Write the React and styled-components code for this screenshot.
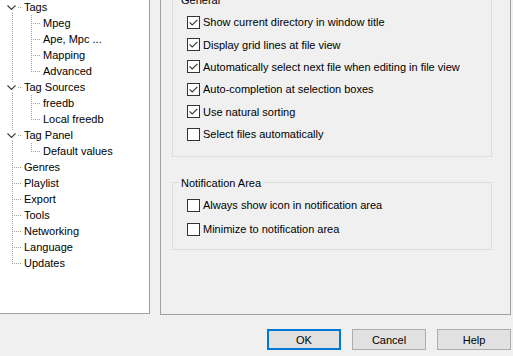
import styled, { createGlobalStyle } from "styled-components";

const GlobalStyle = createGlobalStyle`
  html, body {
    margin: 0;
    padding: 0;
    background: #f0f0f0;
  }
  body {
    font-family: "Liberation Sans", Arial, sans-serif;
    font-size: 11px;
    color: #000;
  }
`;

const treeItems = [
  { label: "Tags", guides: ["tee"], expander: true, first: true },
  { label: "Mpeg", guides: ["pipe", "tee"] },
  { label: "Ape, Mpc ...", guides: ["pipe", "tee"] },
  { label: "Mapping", guides: ["pipe", "tee"] },
  { label: "Advanced", guides: ["pipe", "elbow"] },
  { label: "Tag Sources", guides: ["tee"], expander: true },
  { label: "freedb", guides: ["pipe", "tee"] },
  { label: "Local freedb", guides: ["pipe", "elbow"] },
  { label: "Tag Panel", guides: ["tee"], expander: true },
  { label: "Default values", guides: ["pipe", "elbow"] },
  { label: "Genres", guides: ["tee"] },
  { label: "Playlist", guides: ["tee"] },
  { label: "Export", guides: ["tee"] },
  { label: "Tools", guides: ["tee"] },
  { label: "Networking", guides: ["tee"] },
  { label: "Language", guides: ["tee"] },
  { label: "Updates", guides: ["elbow"] },
];

const generalOptions = [
  { label: "Show current directory in window title", checked: true },
  { label: "Display grid lines at file view", checked: true },
  { label: "Automatically select next file when editing in file view", checked: true },
  { label: "Auto-completion at selection boxes", checked: true },
  { label: "Use natural sorting", checked: true },
  { label: "Select files automatically", checked: false },
];

const notificationOptions = [
  { label: "Always show icon in notification area", checked: false },
  { label: "Minimize to notification area", checked: false },
];

const DOTS_V = "repeating-linear-gradient(to bottom, #a0a0a0 0 1px, transparent 1px 2px)";
const DOTS_H = "repeating-linear-gradient(to right, #a0a0a0 0 1px, transparent 1px 2px)";

function guideBackground(kind, first) {
  if (kind === "pipe") {
    return `
      background-image: ${DOTS_V};
      background-size: 1px 16px;
      background-position: 10px 0;
    `;
  }
  if (kind === "elbow") {
    return `
      background-image: ${DOTS_V}, ${DOTS_H};
      background-size: 1px 9px, 9px 1px;
      background-position: 10px 0, 10px 8px;
    `;
  }
  // tee
  return `
    background-image: ${DOTS_V}, ${DOTS_H};
    background-size: 1px ${first ? "8px" : "16px"}, 9px 1px;
    background-position: 10px ${first ? "8px" : "0"}, 10px 8px;
  `;
}

function Expander() {
  return (
    <ExpanderBox>
      <svg width="11" height="9" viewBox="0 0 11 9">
        <path d="M1.5 2.5 L5.5 6.5 L9.5 2.5" fill="none" stroke="#404040" strokeWidth="1.2" />
      </svg>
    </ExpanderBox>
  );
}

function CheckMark() {
  return (
    <svg width="11" height="11" viewBox="0 0 11 11">
      <path d="M1.6 5.4 L4.2 8 L9.4 2.8" fill="none" stroke="#333" strokeWidth="1.1" />
    </svg>
  );
}

function CheckOption({ label, checked, height }) {
  return (
    <CheckRow $h={height}>
      <CheckBox>{checked && <CheckMark />}</CheckBox>
      <CheckLabel>{label}</CheckLabel>
    </CheckRow>
  );
}

export default function App() {
  return (
    <Window>
      <GlobalStyle />
      <Main>
        <Tree>
          {treeItems.map((item) => (
            <TreeRow key={item.label}>
              {item.guides.map((kind, i) => (
                <Guide key={i} $kind={kind} $first={item.first}>
                  {item.expander && i === item.guides.length - 1 && <Expander />}
                </Guide>
              ))}
              <TreeLabel>{item.label}</TreeLabel>
            </TreeRow>
          ))}
        </Tree>

        <Panel>
          <Group $pad="4px 14px 11px">
            <Legend>General</Legend>
            {generalOptions.map((o) => (
              <CheckOption key={o.label} {...o} height={22.4} />
            ))}
          </Group>

          <Group $pad="3px 14px 8px">
            <Legend>Notification Area</Legend>
            {notificationOptions.map((o) => (
              <CheckOption key={o.label} {...o} height={24} />
            ))}
          </Group>
        </Panel>
      </Main>

      <ButtonBar>
        <Button $default>OK</Button>
        <Button>Cancel</Button>
        <Button>Help</Button>
      </ButtonBar>
    </Window>
  );
}

const Window = styled.div`
  width: 513px;
  height: 356px;
  overflow: hidden;
  background: #f0f0f0;
`;

const Main = styled.div`
  display: flex;
  align-items: flex-start;
  gap: 10px;
  margin-top: -20px;
  height: 335px;
`;

const Tree = styled.div`
  flex: none;
  width: 150px;
  height: 334px;
  box-sizing: border-box;
  background: #fff;
  border: 1px solid #a0a0a0;
  border-left: none;
  padding: 18px 0 0 2px;
  overflow: hidden;
`;

const TreeRow = styled.div`
  display: flex;
  align-items: center;
  height: 16px;
`;

const Guide = styled.span`
  flex: none;
  width: 19px;
  height: 16px;
  display: flex;
  align-items: center;
  background-repeat: no-repeat;
  ${({ $kind, $first }) => guideBackground($kind, $first)}
`;

const ExpanderBox = styled.span`
  display: flex;
  margin-left: 4px;
  background: #fff;
`;

const TreeLabel = styled.span`
  padding-left: 3px;
  line-height: 16px;
  white-space: nowrap;
`;

const Panel = styled.div`
  flex: none;
  width: 351px;
  height: 335px;
  box-sizing: border-box;
  border: 1px solid #a0a0a0;
  padding: 11px 18px 0 11px;
  display: flex;
  flex-direction: column;
  gap: 18px;
`;

const Group = styled.fieldset`
  margin: 0;
  min-width: 0;
  border: 1px solid #dcdcdc;
  padding: ${(p) => p.$pad};
  display: flex;
  flex-direction: column;
`;

const Legend = styled.legend`
  padding: 2px 2px 0;
  margin-left: -8px;
  line-height: 13px;
  font-size: 11px;
`;

const CheckRow = styled.div`
  display: flex;
  align-items: center;
  height: ${(p) => p.$h}px;
`;

const CheckBox = styled.span`
  flex: none;
  width: 13px;
  height: 13px;
  box-sizing: border-box;
  border: 1px solid #333;
  background: #fff;
  margin-right: 3px;
  display: flex;
  align-items: center;
  justify-content: center;
`;

const CheckLabel = styled.span`
  white-space: nowrap;
`;

const ButtonBar = styled.div`
  display: flex;
  justify-content: flex-end;
  gap: 11px;
  margin-top: 14px;
  padding-right: 2px;
`;

const Button = styled.button`
  width: 74px;
  height: 21px;
  box-sizing: border-box;
  padding: 0;
  font-family: "Liberation Sans", Arial, sans-serif;
  font-size: 11px;
  color: #000;
  background: #e1e1e1;
  border: ${(p) => (p.$default ? "2px solid #0078d7" : "1px solid #adadad")};
  border-radius: 0;
`;
